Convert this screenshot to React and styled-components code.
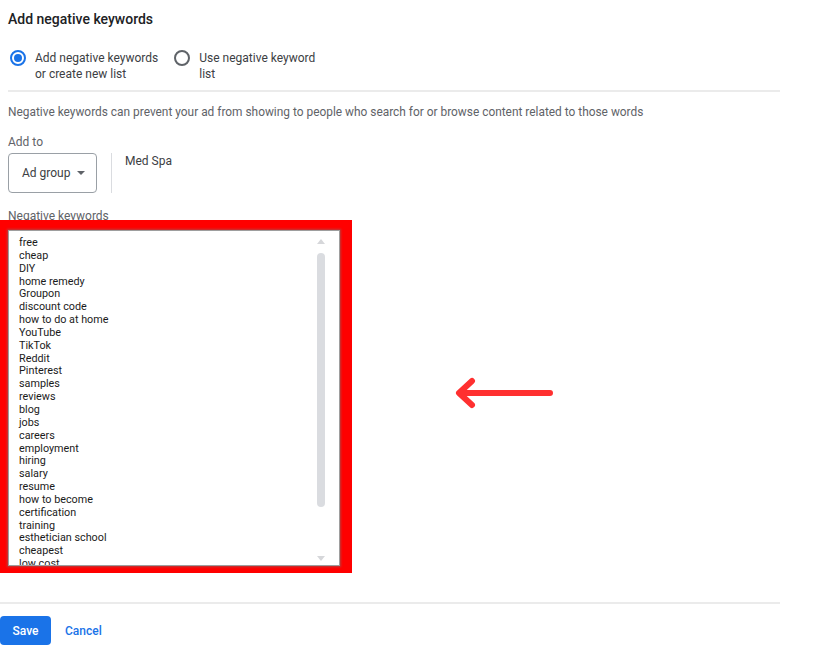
import styled, { createGlobalStyle } from 'styled-components'

const GlobalStyle = createGlobalStyle`
  body {
    margin: 0;
    background: #fff;
    font-family: Roboto, 'Liberation Sans', Arial, sans-serif;
  }
`

const KEYWORDS = [
  'free', 'cheap', 'DIY', 'home remedy', 'Groupon', 'discount code',
  'how to do at home', 'YouTube', 'TikTok', 'Reddit', 'Pinterest', 'samples',
  'reviews', 'blog', 'jobs', 'careers', 'employment', 'hiring', 'salary',
  'resume', 'how to become', 'certification', 'training', 'esthetician school',
  'cheapest', 'low cost'
]

const Page = styled.div`
  position: relative;
  width: 829px;
  height: 652px;
  overflow: hidden;
`

const Panel = styled.div`
  width: 772px;
  padding: 11px 0 0 8px;
`

const Title = styled.h2`
  margin: 0;
  font-size: 14px;
  line-height: 16px;
  font-weight: 500;
  color: #202124;
`

const RadioRow = styled.div`
  display: flex;
  margin-top: 23px;
  padding-left: 2px;
  gap: 16px;
`

const RadioOption = styled.label`
  display: flex;
  align-items: flex-start;
  gap: 9px;
  font-size: 12px;
  line-height: 16px;
  color: #3c4043;
`

const RadioCircle = styled.span`
  width: 16px;
  height: 16px;
  box-sizing: border-box;
  border-radius: 50%;
  border: 2px solid ${({ checked }) => (checked ? '#1a73e8' : '#5f6368')};
  display: flex;
  align-items: center;
  justify-content: center;
  flex-shrink: 0;

  &::after {
    content: '';
    width: 8px;
    height: 8px;
    border-radius: 50%;
    background: ${({ checked }) => (checked ? '#1a73e8' : 'transparent')};
  }
`

const Divider = styled.hr`
  margin: ${({ m }) => m || '0'};
  border: none;
  height: 2px;
  background: #ebebeb;
`

const Description = styled.p`
  margin: 12px 0 0;
  font-size: 11.9px;
  line-height: 16px;
  color: #5f6368;
`

const FieldLabel = styled.div`
  margin-top: ${({ mt }) => mt || '14px'};
  font-size: 12px;
  line-height: 16px;
  color: #5f6368;
`

const AddToRow = styled.div`
  display: flex;
  align-items: stretch;
  margin-top: 3px;
  height: 40px;
`

const SelectBox = styled.div`
  width: 89px;
  box-sizing: border-box;
  border: 1px solid #9aa0a6;
  border-radius: 4px;
  display: flex;
  align-items: center;
  padding-left: 13px;
  gap: 7px;
  font-size: 12px;
  color: #3c4043;
`

const Caret = styled.span`
  width: 0;
  height: 0;
  border-left: 4px solid transparent;
  border-right: 4px solid transparent;
  border-top: 4px solid #5f6368;
`

const VRule = styled.div`
  width: 1px;
  background: #dadce0;
  margin: 0 13px 0 14px;
`

const GroupName = styled.div`
  padding-top: 1px;
  font-size: 12px;
  line-height: 14px;
  color: #3c4043;
`

const Highlight = styled.div`
  position: relative;
  margin: -4px 0 0 -8px;
  width: 352px;
  box-sizing: border-box;
  background: #ff0000;
  padding: 10px 12px 7px 8px;
`

const KeywordArea = styled.div`
  position: relative;
  height: 336px;
  box-sizing: border-box;
  background: #fff;
  border: 1px solid #9e9e9e;
  box-shadow: 0 0 2px 1px rgba(120, 120, 120, 0.5);
  overflow: hidden;
  padding: 6px 0 0 10px;
`

const KeywordLine = styled.div`
  font-size: 10.8px;
  line-height: 12.85px;
  height: 12.85px;
  color: #1b1b1b;
`

const ScrollTrack = styled.div`
  position: absolute;
  top: 8px;
  right: 14px;
  bottom: 4px;
  width: 8px;
  display: flex;
  flex-direction: column;
  align-items: center;
`

const Arrow = styled.span`
  width: 0;
  height: 0;
  border-left: 4px solid transparent;
  border-right: 4px solid transparent;
  ${({ up }) =>
    up ? 'border-bottom: 5px solid #d6d7da;' : 'border-top: 5px solid #d6d7da;'}
`

const Thumb = styled.div`
  width: 8px;
  height: 254px;
  margin: 9px 0 auto;
  border-radius: 4px;
  background: #dadce0;
`

const Footer = styled.div`
  display: flex;
  align-items: center;
  gap: 14px;
  margin-left: -8px;
  padding-top: 12px;
`

const SaveButton = styled.button`
  width: 51px;
  height: 29px;
  border: none;
  border-radius: 4px;
  background: #1a73e8;
  color: #fff;
  font-family: inherit;
  font-size: 12px;
  font-weight: 500;
  padding: 0;
`

const CancelButton = styled.button`
  border: none;
  background: none;
  color: #1a73e8;
  font-family: inherit;
  font-size: 12px;
  font-weight: 500;
  padding: 0;
`

const Pointer = styled.svg`
  position: absolute;
  left: 452px;
  top: 374px;
`

export default function App() {
  return (
    <Page>
      <GlobalStyle />
      <Panel>
        <Title>Add negative keywords</Title>
        <RadioRow>
          <RadioOption>
            <RadioCircle checked />
            <span>
              Add negative keywords
              <br />
              or create new list
            </span>
          </RadioOption>
          <RadioOption>
            <RadioCircle />
            <span>
              Use negative keyword
              <br />
              list
            </span>
          </RadioOption>
        </RadioRow>
        <Divider m="8px 0 0" />
        <Description>
          Negative keywords can prevent your ad from showing to people who search for or browse
          content related to those words
        </Description>
        <FieldLabel>Add to</FieldLabel>
        <AddToRow>
          <SelectBox>
            Ad group <Caret />
          </SelectBox>
          <VRule />
          <GroupName>Med Spa</GroupName>
        </AddToRow>
        <FieldLabel mt="15px">Negative keywords</FieldLabel>
        <Highlight>
          <KeywordArea>
            {KEYWORDS.map((k) => (
              <KeywordLine key={k}>{k}</KeywordLine>
            ))}
            <ScrollTrack>
              <Arrow up />
              <Thumb />
              <Arrow />
            </ScrollTrack>
          </KeywordArea>
        </Highlight>
        <Divider m="29px 0 0 -8px" />
        <Footer>
          <SaveButton>Save</SaveButton>
          <CancelButton>Cancel</CancelButton>
        </Footer>
      </Panel>
      <Pointer width="104" height="40" viewBox="0 0 104 40">
        <path
          d="M98 19 H10 M20 7 L7 19 L20 31"
          fill="none"
          stroke="#ff3030"
          strokeWidth="6"
          strokeLinecap="round"
          strokeLinejoin="round"
        />
      </Pointer>
    </Page>
  )
}
